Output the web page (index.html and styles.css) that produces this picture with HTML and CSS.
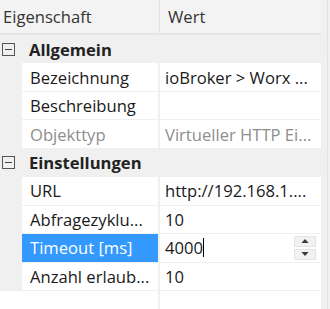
FILE: index.html
```html
<!DOCTYPE html>
<html lang="de">
<head>
<meta charset="utf-8">
<title>Eigenschaften</title>
<link rel="stylesheet" href="styles.css">
</head>
<body>
<div class="frame">
  <div class="grid">
    <div class="head">
      <div class="head-name">Eigenschaft</div>
      <div class="head-sep"></div>
      <div class="head-value">Wert</div>
    </div>
    <div class="group">
      <span class="toggle"><span class="minus"></span></span>
      <span class="group-label">Allgemein</span>
    </div>
    <div class="row">
      <div class="gutter"></div>
      <div class="name">Bezeichnung</div>
      <div class="sep"></div>
      <div class="value">ioBroker &gt; Worx ...</div>
    </div>
    <div class="row">
      <div class="gutter"></div>
      <div class="name">Beschreibung</div>
      <div class="sep"></div>
      <div class="value"></div>
    </div>
    <div class="row disabled">
      <div class="gutter"></div>
      <div class="name">Objekttyp</div>
      <div class="sep"></div>
      <div class="value">Virtueller HTTP Ei...</div>
    </div>
    <div class="group">
      <span class="toggle"><span class="minus"></span></span>
      <span class="group-label">Einstellungen</span>
    </div>
    <div class="row">
      <div class="gutter"></div>
      <div class="name">URL</div>
      <div class="sep"></div>
      <div class="value">http://192.168.1....</div>
    </div>
    <div class="row">
      <div class="gutter"></div>
      <div class="name">Abfragezyklu...</div>
      <div class="sep"></div>
      <div class="value">10</div>
    </div>
    <div class="row selected">
      <div class="gutter"></div>
      <div class="name">Timeout [ms]</div>
      <div class="sep"></div>
      <div class="value editing">
        <span class="edit-text">4000</span><span class="caret"></span>
        <span class="spinner">
          <span class="spin-btn"><svg width="9" height="5" viewBox="0 0 9 5"><path d="M0 5 L4.5 0 L9 5 Z" fill="#3a3a3a"/></svg></span>
          <span class="spin-btn"><svg width="9" height="5" viewBox="0 0 9 5"><path d="M0 0 L4.5 5 L9 0 Z" fill="#3a3a3a"/></svg></span>
        </span>
      </div>
    </div>
    <div class="row">
      <div class="gutter"></div>
      <div class="name">Anzahl erlaub...</div>
      <div class="sep"></div>
      <div class="value">10</div>
    </div>
    <div class="filler">
      <div class="filler-left"></div>
      <div class="sep"></div>
      <div class="filler-right"></div>
    </div>
  </div>
  <div class="strip"><div class="strip-line"></div></div>
</div>
</body>
</html>
```
FILE: styles.css
```css
html, body {
  margin: 0;
  padding: 0;
}
body {
  width: 330px;
  height: 309px;
  overflow: hidden;
  background: #ffffff;
  font-family: "Open Sans", "Noto Sans", sans-serif;
  font-size: 16.6px;
  color: #1a1a1a;
}
.frame {
  display: flex;
  height: 309px;
}
.grid {
  width: 321px;
  display: flex;
  flex-direction: column;
  background: #f0f0f0;
}
.strip {
  flex: 1;
  display: flex;
  justify-content: flex-end;
  background: #f0f0f0;
  padding-right: 2px;
}
.strip-line {
  width: 1px;
  background: #e2e2e2;
}
.head {
  flex: none;
  display: flex;
  align-items: stretch;
  background: #f3f3f3;
  border-bottom: 2px solid #e6e6e6;
  box-sizing: border-box;
  height: 35px;
  color: #333;
}
.head-name {
  width: 156px;
  padding-left: 3px;
  display: flex;
  align-items: center;
}
.head-sep {
  width: 1px;
  background: #e2e2e2;
}
.head-value {
  flex: 1;
  padding-left: 8px;
  display: flex;
  align-items: center;
}
.group {
  height: 28.45px;
  flex: none;
  display: flex;
  align-items: center;
  background: #f0f0f0;
  box-sizing: border-box;
}
.toggle {
  width: 11px;
  height: 11px;
  margin-left: 2px;
  border: 1px solid #555;
  display: flex;
  align-items: center;
  justify-content: center;
  box-sizing: content-box;
}
.minus {
  width: 7px;
  height: 1px;
  background: #444;
}
.group-label {
  margin-left: 14px;
  font-weight: 700;
  color: #222;
}
.row {
  height: 28.45px;
  flex: none;
  display: flex;
  padding-bottom: 1px;
  box-sizing: border-box;
}
.gutter {
  width: 22px;
  background: #f0f0f0;
}
.name {
  width: 136px;
  background: #ffffff;
  padding-left: 8px;
  box-sizing: border-box;
  display: flex;
  align-items: center;
  white-space: nowrap;
  overflow: hidden;
}
.sep {
  width: 2px;
  background: #f0f0f0;
}
.value {
  flex: 1;
  background: #ffffff;
  padding-left: 5px;
  display: flex;
  align-items: center;
  white-space: nowrap;
  overflow: hidden;
}
.disabled .name,
.disabled .value {
  color: #8e8e8e;
}
.selected .name {
  background: #3399ff;
  color: #ffffff;
}
.editing {
  padding-right: 5px;
}
.caret {
  width: 1px;
  height: 19px;
  background: #000;
}
.spinner {
  margin-left: auto;
  display: flex;
  flex-direction: column;
  gap: 2px;
}
.spin-btn {
  width: 22px;
  height: 11px;
  background: #f2f2f2;
  border: 1px solid #e4e4e4;
  box-sizing: border-box;
  display: flex;
  align-items: center;
  justify-content: center;
}
.spin-btn svg {
  display: block;
  width: 8px;
  height: 4px;
}
.filler {
  flex: 1;
  display: flex;
  background: #ffffff;
}
.filler-left {
  width: 158px;
  background: #ffffff;
}
.filler-right {
  flex: 1;
  background: #ffffff;
}
```
